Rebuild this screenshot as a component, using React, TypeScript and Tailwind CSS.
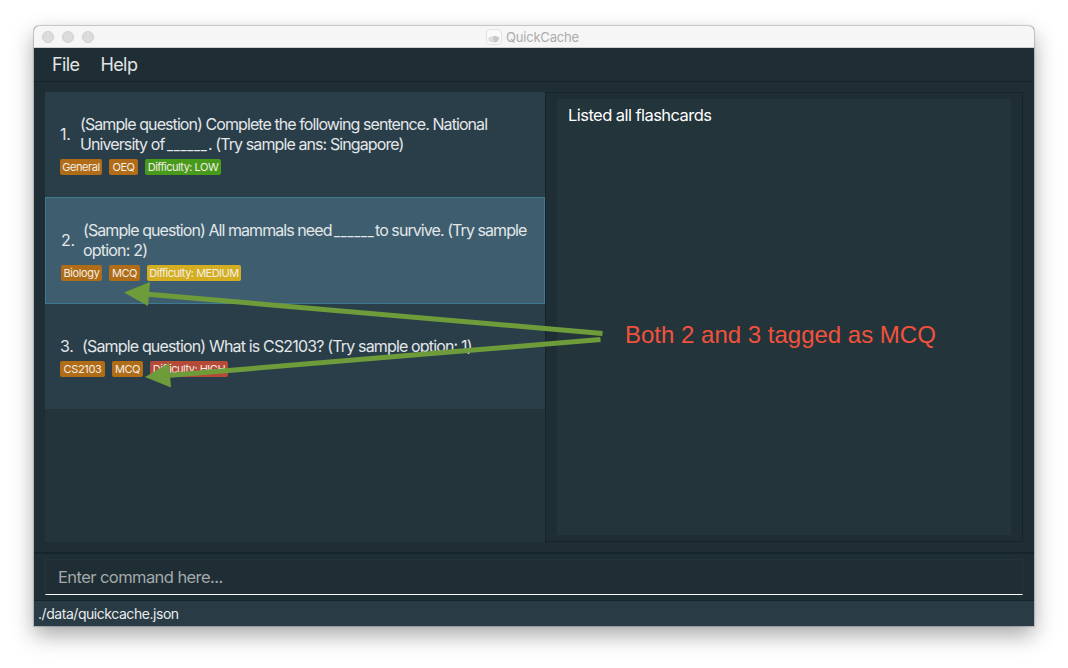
type Tag = { label: string; style: string };

type Flashcard = {
  id: number;
  lines: { text: string; style: string }[];
  tags: Tag[];
  cell: string;
  idStyle: string;
};

const cards: Flashcard[] = [
  {
    id: 1,
    cell: "h-[105px] bg-[#2a3e49] pl-[15px]",
    idStyle: "w-[20px]",
    lines: [
      { text: "(Sample question) Complete the following sentence. National", style: "tracking-[-0.92px]" },
      { text: "University of ______ . (Try sample ans: Singapore)", style: "tracking-[-0.9px]" },
    ],
    tags: [
      { label: "General", style: "w-[42px] bg-[#b06c16] tracking-[-0.4px]" },
      { label: "OEQ", style: "w-[29px] bg-[#b06c16] tracking-[-0.5px]" },
      { label: "Difficulty: LOW", style: "w-[76px] bg-[#489a1b] tracking-[-0.5px]" },
    ],
  },
  {
    id: 2,
    cell: "h-[107px] border border-[#3e7b91] bg-[#3e5e6f] pl-[15px]",
    idStyle: "w-[22px]",
    lines: [
      { text: "(Sample question) All mammals need ______ to survive. (Try sample", style: "tracking-[-0.93px]" },
      { text: "option: 2)", style: "tracking-[-0.8px]" },
    ],
    tags: [
      { label: "Biology", style: "w-[41px] bg-[#b06c16] tracking-[-0.4px]" },
      { label: "MCQ", style: "w-[31px] bg-[#b06c16] tracking-[-0.5px]" },
      { label: "Difficulty: MEDIUM", style: "w-[94px] bg-[#d4ae20] tracking-[-0.5px]" },
    ],
  },
  {
    id: 3,
    cell: "h-[105px] bg-[#2a3e49] pl-[15px]",
    idStyle: "w-[22px]",
    lines: [
      { text: "(Sample question) What is CS2103? (Try sample option: 1)", style: "tracking-[-0.84px]" },
    ],
    tags: [
      { label: "CS2103", style: "w-[45px] bg-[#b06c16] tracking-[-0.3px]" },
      { label: "MCQ", style: "w-[31px] bg-[#b06c16] tracking-[-0.5px]" },
      { label: "Difficulty: HIGH", style: "w-[78px] bg-[#b54a37] tracking-[-0.5px]" },
    ],
  },
];

function TitleBar() {
  return (
    <header className="flex h-[22px] shrink-0 items-center rounded-t-[5px] border-b border-[#cfcfcf] bg-[#f6f6f6] pl-2">
      <div className="flex gap-2">
        <span className="size-3 rounded-full border border-[#cfcfcf] bg-[#dcdcdc]" />
        <span className="size-3 rounded-full border border-[#cfcfcf] bg-[#dcdcdc]" />
        <span className="size-3 rounded-full border border-[#cfcfcf] bg-[#dcdcdc]" />
      </div>
      <div className="ml-[392px] flex items-center gap-1">
        <svg width="16" height="16" viewBox="0 0 16 16">
          <rect x="0.5" y="0.5" width="15" height="15" rx="3.5" fill="#fafafa" stroke="#e2e2e2" />
          <path d="M2 9 4 8 5 7 6.500 7.500 8 6 9 7.500 11 7 13.500 8.500 13 11.500 11 13.500H6.500L3 12.500Z" fill="#dedede" />
          <path d="M7 8.500 8.500 7.500 9.500 6.500 10.500 8 13 8 12 11.500 9.500 13.500 7.500 12Z" fill="#c8c8c8" />
        </svg>
        <span className="text-[13px] leading-4 tracking-[-0.2px] text-[#ababab]">QuickCache</span>
      </div>
    </header>
  );
}

/* Runs of underscores are set smaller and spaced out, so the blank reads as separate dashes. */
function QuestionText({ text }: { text: string }) {
  return (
    <>
      {text.split(/(_+)/).map((part, index) =>
        part.startsWith("_") ? (
          <span key={index} className="-mr-[3px] -ml-px text-[13px] font-medium tracking-[0.7px]">{part}</span>
        ) : (
          part
        ),
      )}
    </>
  );
}

function CardCell({ card }: { card: Flashcard }) {
  return (
    <li className={`flex shrink-0 flex-col justify-center ${card.cell}`}>
      <div className="-mt-px flex items-center pb-[5px] text-[16px] leading-5 text-[#e3e7e9]">
        <span className={`shrink-0 tracking-[-0.3px] ${card.idStyle}`}>{card.id}.</span>
        <div className="flex flex-col whitespace-pre">
          {card.lines.map((line) => (
            <div key={line.text} className={`h-5 ${line.style}`}>
              <QuestionText text={line.text} />
            </div>
          ))}
        </div>
      </div>
      <div className="flex gap-[7px]">
        {card.tags.map((tag) => (
          <span
            key={tag.label}
            className={`flex h-4 items-center justify-center rounded-[2px] text-[11px] leading-4 whitespace-nowrap text-[#f3eee6] ${tag.style}`}
          >
            {tag.label}
          </span>
        ))}
      </div>
    </li>
  );
}

function Annotation() {
  return (
    <>
      <svg className="pointer-events-none absolute top-0 left-0" width="1068" height="668" viewBox="0 0 1068 668">
        <g fill="#6f9c3b" stroke="#6f9c3b">
          <path d="M148 294.300 602.500 333.500" strokeWidth="5" />
          <path d="M124 292.500 150 282 148 306Z" stroke="none" />
          <path d="M170 375.300 600.500 339.500" strokeWidth="5" />
          <path d="M145 377 169 363 171 387.500Z" stroke="none" />
        </g>
      </svg>
      <p className="absolute top-[321px] left-[625px] font-['Liberation_Sans',sans-serif] text-[24px] leading-7 whitespace-nowrap text-[#f2523c]">
        Both 2 and 3 tagged as MCQ
      </p>
    </>
  );
}

export default function App() {
  return (
    <div className="relative h-[668px] w-[1068px] overflow-hidden bg-white pt-[26px] pl-[34px] font-['Inter',sans-serif]">
      <div className="flex h-[600px] w-[1000px] flex-col rounded-t-[5px] bg-[#1f2e35] shadow-[0_9px_22px_rgba(0,0,0,0.35),0_0_1px_1px_rgba(0,0,0,0.18)]">
        <TitleBar />
        <nav className="flex h-[34px] shrink-0 items-center gap-[21px] border-b border-[#16252b] pl-[18px] text-[18px] text-[#e3e5e6]">
          <span className="tracking-[-0.6px]">File</span>
          <span className="tracking-[-0.6px]">Help</span>
        </nav>
        <main className="flex h-[470px] shrink-0 px-[11px] pt-[10px] pb-[10px]">
          <ul className="flex w-[500px] flex-col bg-[#23343b]">
            {cards.map((card) => (
              <CardCell key={card.id} card={card} />
            ))}
          </ul>
          <section className="w-[478px] border border-[#16252b] px-[11px] pt-[6px] pb-[6px]">
            <div className="h-full bg-[#23343b] pt-[6px] pl-[11px] text-[16.5px] leading-5 text-white">
              <span className="tracking-[-0.55px]">Listed all flashcards</span>
            </div>
          </section>
        </main>
        <div className="h-[49px] shrink-0 border-t-2 border-b border-t-[#16252b] border-b-[#16252b] px-[11px] pt-[5px]">
          <div className="flex h-[36px] items-center border border-[#23343b] border-b-white pl-3 text-[16.5px] text-[#a5a9ab]">
            <span className="tracking-[-0.57px]">Enter command here...</span>
          </div>
        </div>
        <footer className="flex grow items-center bg-[#293b45] pl-1 text-[14px] text-[#e9ebec]">
          <span className="tracking-[-0.45px]">./data/quickcache.json</span>
        </footer>
      </div>
      <Annotation />
    </div>
  );
}
